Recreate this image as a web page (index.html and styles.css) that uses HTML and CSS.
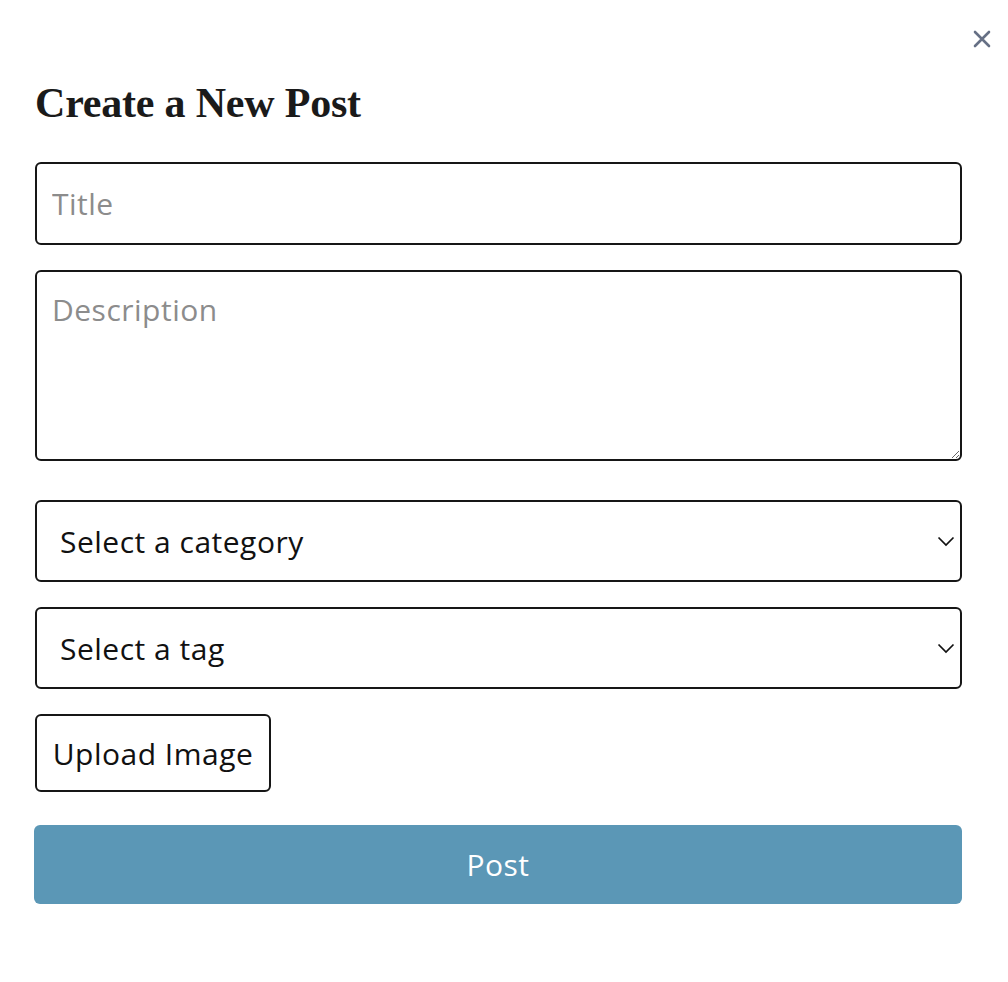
FILE: index.html
```html
<!DOCTYPE html>
<html lang="en">
<head>
<meta charset="utf-8">
<title>Create a New Post</title>
<link rel="stylesheet" href="styles.css">
</head>
<body>
<div class="modal">
  <button class="close" aria-label="Close">
    <svg width="18" height="18" viewBox="0 0 18 18"><path d="M2 2 L16 16 M16 2 L2 16" stroke="#667085" stroke-width="2.6" stroke-linecap="round"/></svg>
  </button>
  <h1 class="heading">Create a New Post</h1>
  <form class="form">
    <input class="field" type="text" placeholder="Title">
    <textarea class="field area" placeholder="Description"></textarea>
    <div class="select-wrap">
      <select class="field select"><option>Select a category</option></select>
      <svg class="chev" width="18" height="11" viewBox="0 0 18 11"><path d="M1.5 1.5 L9 9 L16.5 1.5" fill="none" stroke="#111" stroke-width="1.7"/></svg>
    </div>
    <div class="select-wrap">
      <select class="field select"><option>Select a tag</option></select>
      <svg class="chev" width="18" height="11" viewBox="0 0 18 11"><path d="M1.5 1.5 L9 9 L16.5 1.5" fill="none" stroke="#111" stroke-width="1.7"/></svg>
    </div>
    <div class="upload-row"><button type="button" class="upload">Upload Image</button></div>
    <button type="button" class="submit">Post</button>
  </form>
</div>
</body>
</html>
```
FILE: styles.css
```css
html, body { margin: 0; padding: 0; background: #fff; }
body { font-family: "Open Sans", "Noto Sans", "Lato", sans-serif; }
.modal { position: relative; padding: 77px 46px 0 34px; }
.close { position: absolute; top: 30px; right: 17px; background: none; border: 0; padding: 0; width: 18px; height: 18px; display: flex; }
.heading { margin: 0 0 33px 1px; font-family: "Liberation Serif", "DejaVu Serif", serif; font-weight: 700; font-size: 42px; line-height: 52px; color: #1a1a1a; letter-spacing: -0.2px; }
.form { display: flex; flex-direction: column; gap: 25px; }
.field { box-sizing: border-box; width: 100%; margin: 0; border: 2px solid #161616; border-radius: 6px; background: #fff; font-family: inherit; font-size: 30px; letter-spacing: 0.5px; color: #111; outline: none; }
.field::placeholder { color: #8c8c8c; }
input.field { height: 83px; padding: 0 15px; margin-left: 1px; width: calc(100% - 1px); }
.area { height: 191px; padding: 18px 15px; resize: vertical; display: block; margin-left: 1px; width: calc(100% - 1px); margin-bottom: 14px; line-height: 1.35; }
.select-wrap { position: relative; margin-left: 1px; }
.select { appearance: none; -webkit-appearance: none; height: 82px; padding: 0 40px 0 23px; }
.chev { position: absolute; right: 7px; top: 36px; pointer-events: none; }
.upload-row { display: flex; margin-left: 1px; }
.upload { box-sizing: border-box; height: 78px; width: 236px; border: 2px solid #161616; border-radius: 6px; background: #fff; font-family: inherit; font-size: 30px; letter-spacing: 0.5px; color: #111; padding: 0; }
.submit { margin-top: 8px; height: 79px; border: 0; border-radius: 6px; background: #5b97b6; color: #fff; font-family: inherit; font-size: 30px; letter-spacing: 0.5px; width: 100%; }
```
